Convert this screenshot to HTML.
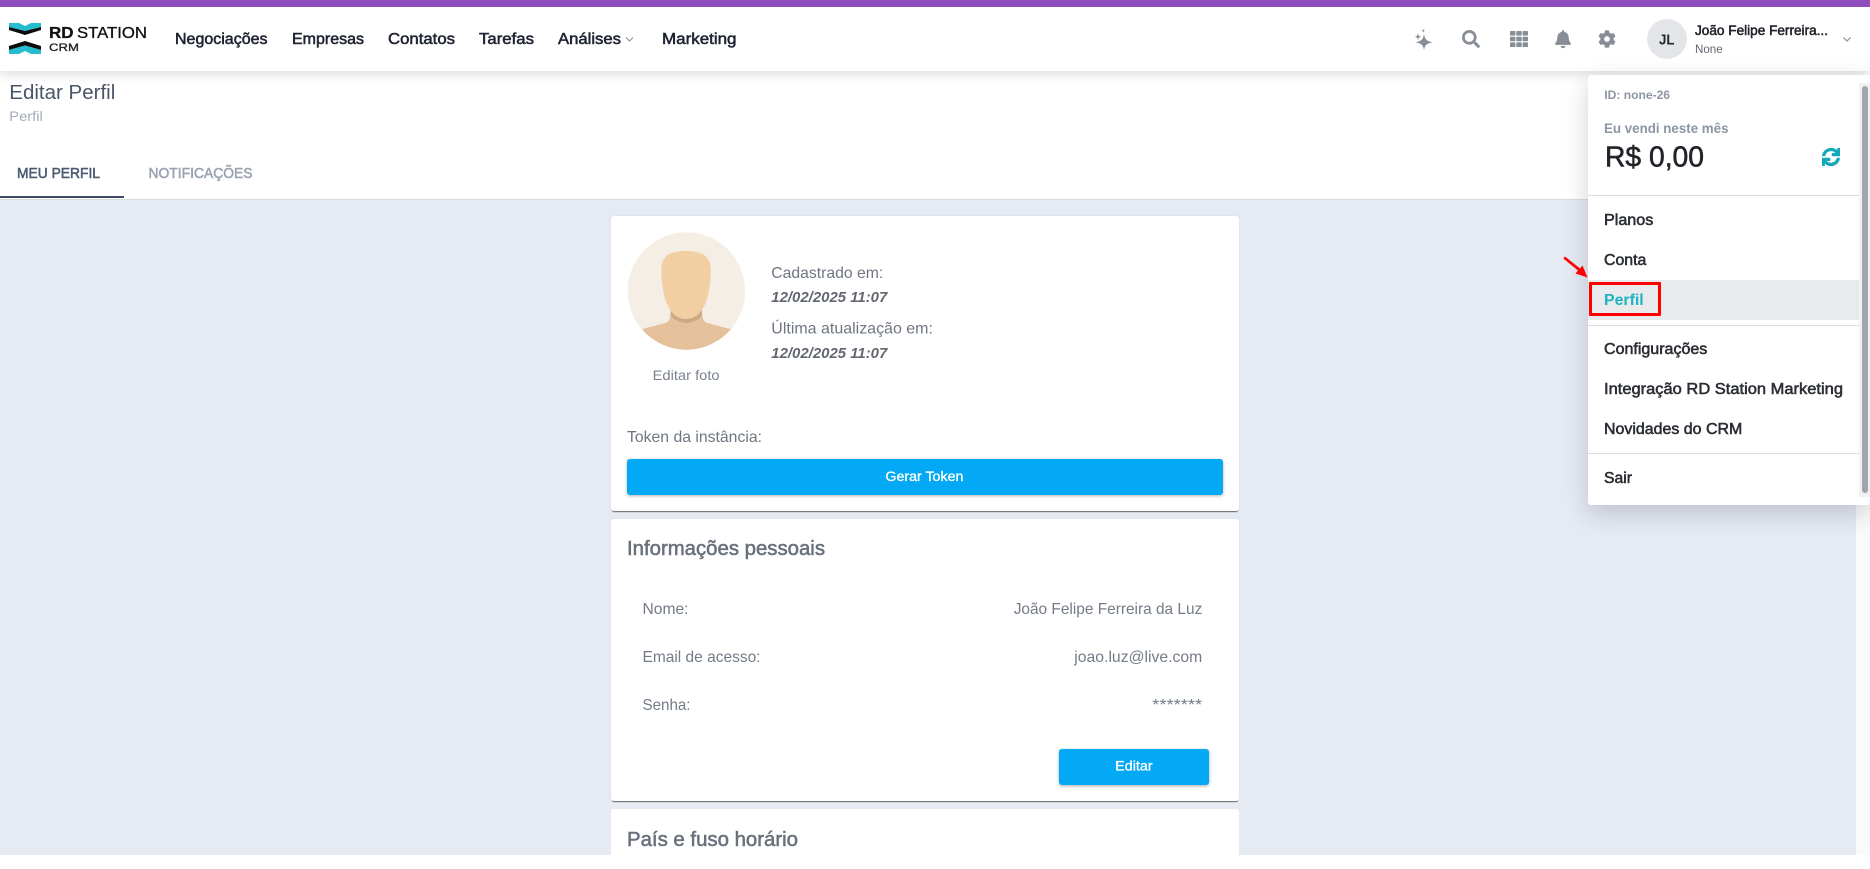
<!DOCTYPE html>
<html lang="pt-BR"><head><meta charset="utf-8"><title>Editar Perfil</title>
<style>
html,body{margin:0;padding:0;width:1870px;height:855px;overflow:hidden;background:#fff}
.b{position:absolute}
svg{position:absolute;left:0;top:0}
text{font-family:"Liberation Sans",sans-serif}
.sb{stroke:currentColor;stroke-width:.55px}
.md{stroke:currentColor;stroke-width:.3px}
</style></head><body>
<div class="b" style="left:0;top:200px;width:1856px;height:655px;background:#e6eaf2"></div>
<div class="b" style="left:1856px;top:200px;width:14px;height:655px;background:#fafafa"></div>
<div class="b" style="left:0;top:199px;width:1856px;height:1px;background:#d8dbe0"></div>
<div class="b" style="left:0;top:196px;width:124px;height:2px;background:#3e4c66"></div>
<div class="b" style="left:0;top:0;width:1870px;height:71px;background:#fff;box-shadow:0 2px 12px rgba(0,0,0,.16)"></div>
<div class="b" style="left:0;top:0;width:1870px;height:7px;background:#8f4dbc"></div>
<div class="b" style="left:611px;top:216px;width:628px;height:295px;background:#fff;border-radius:3px;box-shadow:0 2px 1px -1px rgba(0,0,0,.55),0 0 2px rgba(0,0,0,.08)"></div>
<div class="b" style="left:611px;top:519px;width:628px;height:282px;background:#fff;border-radius:3px;box-shadow:0 2px 1px -1px rgba(0,0,0,.55),0 0 2px rgba(0,0,0,.08)"></div>
<div class="b" style="left:611px;top:809px;width:628px;height:60px;background:#fff;border-radius:3px"></div>
<div class="b" style="left:627px;top:459px;width:596px;height:36px;background:#03a9f4;border-radius:3px;box-shadow:0 1px 3px rgba(0,0,0,.3)"></div>
<div class="b" style="left:1059px;top:749px;width:150px;height:36px;background:#03a9f4;border-radius:3px;box-shadow:0 1px 3px rgba(0,0,0,.35)"></div>
<div class="b" style="left:1647px;top:19px;width:40px;height:40px;border-radius:50%;background:#e3e5e9"></div>
<div class="b" style="left:1588px;top:75px;width:282px;height:430px;background:#fff;border-radius:3px 0 3px 3px;box-shadow:0 8px 24px rgba(40,50,70,.22)"></div>
<div class="b" style="left:1859px;top:83px;width:11px;height:414px;background:#f1f1f1"></div>
<div class="b" style="left:1862px;top:86px;width:6px;height:407px;background:#a0a6ae;border-radius:3px"></div>
<div class="b" style="left:1588px;top:195px;width:271px;height:1px;background:#dcdcdc"></div>
<div class="b" style="left:1588px;top:280px;width:271px;height:40px;background:#e9eaeb"></div>
<div class="b" style="left:1588px;top:325px;width:271px;height:1px;background:#dcdcdc"></div>
<div class="b" style="left:1588px;top:453px;width:271px;height:1px;background:#dcdcdc"></div>
<div class="b" style="left:1589px;top:282px;width:66px;height:28px;border:3px solid #f00;border-radius:1px"></div>

<svg width="1870" height="855" viewBox="0 0 1870 855" xmlns="http://www.w3.org/2000/svg">
<!-- logo -->
<path fill="#24bccf" d="M9 23H19L25 26L31 23H41V27L25 31L9 27Z"/>
<path fill="#0c0c0c" d="M9 27L25 31L41 27V30L25 35L9 30Z"/>
<path fill="#0c0c0c" d="M9 46L25 41L41 46V50L25 45.500L9 50Z"/>
<path fill="#24bccf" d="M9 50L25 45.500L41 50V54H31L25 51L19 54H9Z"/>
<text x="49" y="38" font-size="15.500" font-weight="700" fill="#111" style="color:#111" class="md" textLength="24.500" lengthAdjust="spacingAndGlyphs">RD</text>
<text x="77" y="38" font-size="15.500" fill="#111" class="md" textLength="70" lengthAdjust="spacingAndGlyphs" style="color:#111">STATION</text>
<text x="49" y="51" font-size="11" fill="#222" style="color:#222" class="md" textLength="30" lengthAdjust="spacingAndGlyphs">CRM</text>

<!-- nav -->
<g font-size="15.500" fill="#1f2433" style="color:#1f2433" class="sb">
<text x="175" y="44" textLength="92.500" lengthAdjust="spacingAndGlyphs">Negociações</text>
<text x="292" y="44" textLength="72" lengthAdjust="spacingAndGlyphs">Empresas</text>
<text x="388" y="44" textLength="67" lengthAdjust="spacingAndGlyphs">Contatos</text>
<text x="479" y="44" textLength="55" lengthAdjust="spacingAndGlyphs">Tarefas</text>
<text x="558" y="44" textLength="63" lengthAdjust="spacingAndGlyphs">Análises</text>
<text x="662" y="44" textLength="74.500" lengthAdjust="spacingAndGlyphs">Marketing</text>
</g>
<path d="M626 37.500L629.500 41L633 37.500" fill="none" stroke="#8a8f98" stroke-width="1"/>

<!-- page head -->
<text x="9.300" y="99" font-size="20.500" fill="#4a5568" textLength="106" lengthAdjust="spacingAndGlyphs">Editar Perfil</text>
<text x="9.300" y="121" font-size="13.500" fill="#a3abb8" textLength="33.500" lengthAdjust="spacingAndGlyphs">Perfil</text>
<text x="17" y="178" font-size="14.500" fill="#4a5a72" style="color:#4a5a72" class="sb" textLength="83" lengthAdjust="spacingAndGlyphs">MEU PERFIL</text>
<text x="148.500" y="178" font-size="14.500" fill="#9aa3b2" style="color:#9aa3b2" class="sb" textLength="104" lengthAdjust="spacingAndGlyphs">NOTIFICAÇÕES</text>

<!-- header icons -->
<g fill="#878e96">
<path d="M1424 34C1425 39.500 1426.500 41 1432.500 42.300C1426.500 43.600 1425 45 1424 50C1423 45 1421.500 43.600 1415.500 42.300C1421.500 41 1423 39.500 1424 34Z"/>
<path d="M1418 33C1418.400 35.600 1419 36.300 1421.500 36.700C1419 37.100 1418.400 37.800 1418 40.400C1417.600 37.800 1417 37.100 1414.500 36.700C1417 36.300 1417.600 35.600 1418 33Z"/>
<path d="M1423.300 28.500C1423.500 30.200 1423.900 30.600 1425.500 30.800C1423.900 31 1423.500 31.400 1423.300 33.100C1423.100 31.400 1422.700 31 1421.100 30.800C1422.700 30.600 1423.100 30.200 1423.300 28.500Z"/>
<svg x="1462" y="30" width="18" height="18" viewBox="0 0 512 512"><path d="M505 442.700L405.300 343c-4.500-4.500-10.600-7-17-7H372c27.600-35.300 44-79.700 44-128C416 93.100 322.900 0 208 0S0 93.100 0 208s93.100 208 208 208c48.300 0 92.700-16.400 128-44v16.300c0 6.400 2.500 12.500 7 17l99.700 99.700c9.400 9.400 24.600 9.400 33.900 0l28.300-28.300c9.400-9.400 9.400-24.600.1-34zM208 336c-70.700 0-128-57.200-128-128 0-70.700 57.200-128 128-128 70.700 0 128 57.200 128 128 0 70.700-57.200 128-128 128z"/></svg>
<g>
<rect x="1510" y="31" width="5.400" height="4.600" rx=".8"/><rect x="1516.300" y="31" width="5.400" height="4.600" rx=".8"/><rect x="1522.600" y="31" width="5.400" height="4.600" rx=".8"/>
<rect x="1510" y="36.700" width="5.400" height="4.600" rx=".8"/><rect x="1516.300" y="36.700" width="5.400" height="4.600" rx=".8"/><rect x="1522.600" y="36.700" width="5.400" height="4.600" rx=".8"/>
<rect x="1510" y="42.400" width="5.400" height="4.600" rx=".8"/><rect x="1516.300" y="42.400" width="5.400" height="4.600" rx=".8"/><rect x="1522.600" y="42.400" width="5.400" height="4.600" rx=".8"/>
</g>
<svg x="1555" y="30" width="16" height="18.300" viewBox="0 0 448 512"><path d="M224 512c35.320 0 63.970-28.650 63.970-64H160.030c0 35.350 28.650 64 63.970 64zm215.390-149.710c-19.320-20.760-55.470-51.990-55.470-154.290 0-77.700-54.480-139.900-127.940-155.160V32c0-17.670-14.320-32-31.980-32s-31.980 14.330-31.980 32v20.840C118.560 68.100 64.080 130.300 64.080 208c0 102.300-36.150 133.530-55.470 154.290-6 6.450-8.660 14.160-8.610 21.710.11 16.400 12.980 32 32.100 32h383.800c19.120 0 32-15.600 32.100-32 .05-7.550-2.610-15.270-8.610-21.710z"/></svg>
<svg x="1598" y="30" width="18" height="18" viewBox="0 0 512 512"><path d="M487.400 315.700l-42.600-24.600c4.300-23.200 4.300-47 0-70.200l42.600-24.600c4.900-2.800 7.100-8.600 5.500-14-11.100-35.600-30-67.800-54.700-94.600-3.800-4.100-10-5.100-14.800-2.300L380.800 110c-17.900-15.400-38.500-27.300-60.800-35.100V25.800c0-5.600-3.900-10.500-9.400-11.700-36.700-8.200-74.300-7.800-109.200 0-5.500 1.200-9.400 6.100-9.400 11.700V75c-22.200 7.900-42.800 19.800-60.800 35.100L88.700 85.500c-4.900-2.800-11-1.900-14.800 2.300-24.700 26.700-43.600 58.900-54.700 94.600-1.700 5.400.6 11.200 5.500 14L67.300 221c-4.300 23.200-4.300 47 0 70.200l-42.600 24.600c-4.900 2.800-7.100 8.600-5.500 14 11.100 35.600 30 67.800 54.700 94.600 3.800 4.100 10 5.100 14.800 2.300l42.600-24.600c17.900 15.400 38.500 27.300 60.800 35.100v49.200c0 5.600 3.900 10.500 9.400 11.700 36.700 8.200 74.300 7.800 109.200 0 5.500-1.200 9.400-6.100 9.400-11.700v-49.200c22.200-7.900 42.800-19.800 60.800-35.100l42.600 24.600c4.900 2.800 11 1.900 14.800-2.300 24.700-26.700 43.600-58.900 54.700-94.600 1.500-5.500-.7-11.300-5.600-14.100zM256 336c-44.100 0-80-35.900-80-80s35.900-80 80-80 80 35.900 80 80-35.900 80-80 80z"/></svg>
</g>

<!-- user -->
<text x="1659" y="44.500" font-size="15" font-weight="700" fill="#23262d" textLength="15.500" lengthAdjust="spacingAndGlyphs">JL</text>
<text x="1695" y="35" font-size="14" fill="#1f2229" style="color:#1f2229" class="sb" textLength="133" lengthAdjust="spacingAndGlyphs">João Felipe Ferreira...</text>
<text x="1695" y="53" font-size="12" fill="#636874" textLength="27.700" lengthAdjust="spacingAndGlyphs">None</text>
<path d="M1843.500 37.500L1847 41L1850.500 37.500" fill="none" stroke="#8a8f98" stroke-width="1.200"/>

<!-- dropdown -->
<text x="1604.300" y="99" font-size="12" font-weight="700" fill="#8c95a3" textLength="65.700" lengthAdjust="spacingAndGlyphs">ID: none-26</text>
<text x="1604" y="133" font-size="14" font-weight="700" fill="#8c95a3" textLength="124.500" lengthAdjust="spacingAndGlyphs">Eu vendi neste mês</text>
<text x="1605" y="166.500" font-size="28.500" fill="#212529" style="color:#212529" class="sb" textLength="99" lengthAdjust="spacingAndGlyphs">R$ 0,00</text>
<svg x="1822" y="148" width="18" height="18" viewBox="0 0 512 512"><path fill="#14a9b8" stroke="#14a9b8" stroke-width="22" d="M440.650 12.570l4 82.770A247.160 247.160 0 0 0 255.830 8C134.730 8 33.910 94.920 12.290 209.820A12 12 0 0 0 24.090 224h49.050a12 12 0 0 0 11.670-9.260 175.910 175.910 0 0 1 317-56.940l-101.460-4.860a12 12 0 0 0-12.570 12v47.410a12 12 0 0 0 12 12H500a12 12 0 0 0 12-12V12a12 12 0 0 0-12-12h-47.370a12 12 0 0 0-11.980 12.570zM255.830 432a175.610 175.610 0 0 1-146-77.800l101.800 4.870a12 12 0 0 0 12.570-12v-47.400a12 12 0 0 0-12-12H12a12 12 0 0 0-12 12V500a12 12 0 0 0 12 12h47.350a12 12 0 0 0 12-12.600l-4.150-82.570A247.170 247.170 0 0 0 255.830 504c121.110 0 221.930-86.920 243.550-201.820a12 12 0 0 0-11.800-14.180h-49.050a12 12 0 0 0-11.670 9.260A175.860 175.860 0 0 1 255.830 432z"/></svg>
<g font-size="15.500" fill="#2b2e33" style="color:#2b2e33" class="sb">
<text x="1604" y="225" textLength="49.300" lengthAdjust="spacingAndGlyphs">Planos</text>
<text x="1604" y="265" textLength="42.300" lengthAdjust="spacingAndGlyphs">Conta</text>
<text x="1604" y="354" textLength="103.300" lengthAdjust="spacingAndGlyphs">Configurações</text>
<text x="1604" y="394" textLength="239" lengthAdjust="spacingAndGlyphs">Integração RD Station Marketing</text>
<text x="1604" y="434" textLength="138.300" lengthAdjust="spacingAndGlyphs">Novidades do CRM</text>
<text x="1604" y="483" textLength="28" lengthAdjust="spacingAndGlyphs">Sair</text>
</g>
<text x="1604" y="305" font-size="15.500" font-weight="700" fill="#1fb2c4" textLength="39.700" lengthAdjust="spacingAndGlyphs">Perfil</text>
<path d="M1563.300 258.500L1565 256.500L1580 268.500L1582.500 265.500L1587.500 277.500L1575.500 273.500L1578 270.500Z" fill="#f00"/>

<!-- avatar -->
<defs><clipPath id="c"><circle cx="686.400" cy="291" r="58.700"/></clipPath></defs>
<g clip-path="url(#c)">
<rect x="620" y="225" width="140" height="140" fill="#f4eee4"/>
<g transform="translate(620 225) scale(.33333)">
<path fill="#e5c19b" d="M60 314L136 294Q152 289 152 262L246 262Q246 289 262 294L338 314V400H60Z"/>
<path fill="#cba985" d="M152 250H246V272Q235 289 198 294Q163 289 152 272Z"/>
<path fill="#f1cfa3" d="M198 78C245 78 272 92 272 135C272 185 262 282 198 282C135 282 124 185 124 135C124 92 150 78 198 78Z"/>
</g></g>

<!-- card 1 -->
<g font-size="16" fill="#6f7681">
<text x="771.300" y="278" textLength="112" lengthAdjust="spacingAndGlyphs">Cadastrado em:</text>
<text x="771.300" y="333.500" textLength="161.600" lengthAdjust="spacingAndGlyphs">Última atualização em:</text>
<text x="627" y="442" textLength="135" lengthAdjust="spacingAndGlyphs">Token da instância:</text>
</g>
<g font-size="14.500" font-weight="700" font-style="italic" fill="#62676f">
<text x="771.300" y="302" textLength="116" lengthAdjust="spacingAndGlyphs">12/02/2025 11:07</text>
<text x="771.300" y="358" textLength="116" lengthAdjust="spacingAndGlyphs">12/02/2025 11:07</text>
</g>
<text x="652.600" y="380" font-size="14" fill="#7b838f" textLength="67" lengthAdjust="spacingAndGlyphs">Editar foto</text>
<text x="885.400" y="481" font-size="14" fill="#fff" style="color:#fff" class="md" textLength="78" lengthAdjust="spacingAndGlyphs">Gerar Token</text>

<!-- card 2 -->
<text x="627" y="555" font-size="20" fill="#69717c" style="color:#69717c" class="sb" textLength="198" lengthAdjust="spacingAndGlyphs">Informações pessoais</text>
<g font-size="16" fill="#747b86">
<text x="642.500" y="614" textLength="46" lengthAdjust="spacingAndGlyphs">Nome:</text>
<text x="1013.700" y="614" textLength="188.600" lengthAdjust="spacingAndGlyphs">João Felipe Ferreira da Luz</text>
<text x="642.500" y="662" textLength="118" lengthAdjust="spacingAndGlyphs">Email de acesso:</text>
<text x="1074.300" y="662" textLength="128" lengthAdjust="spacingAndGlyphs">joao.luz@live.com</text>
<text x="642.500" y="710" textLength="48" lengthAdjust="spacingAndGlyphs">Senha:</text>
<text x="1152.200" y="710" textLength="50" lengthAdjust="spacingAndGlyphs">*******</text>
</g>
<text x="1115.200" y="770.500" font-size="14" fill="#fff" style="color:#fff" class="md" textLength="37.400" lengthAdjust="spacingAndGlyphs">Editar</text>

<!-- card 3 -->
<text x="627" y="846" font-size="20" fill="#69717c" style="color:#69717c" class="sb" textLength="171" lengthAdjust="spacingAndGlyphs">País e fuso horário</text>
</svg>
</body></html>
